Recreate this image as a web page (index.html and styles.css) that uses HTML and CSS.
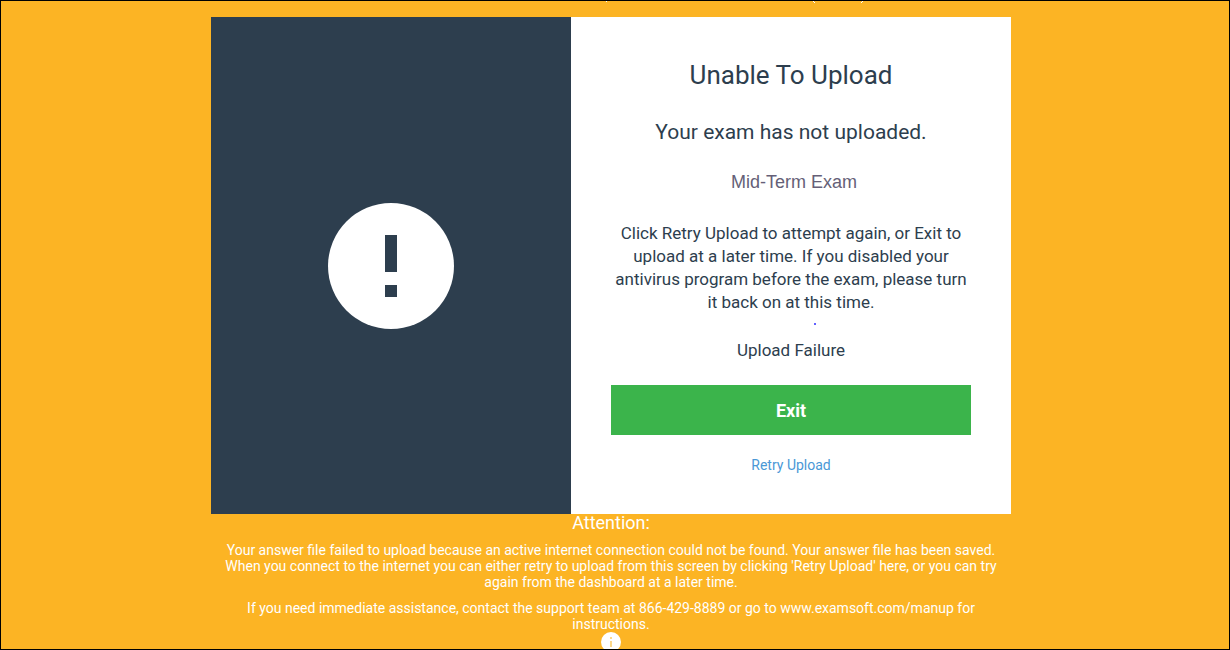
FILE: index.html
```html
<!DOCTYPE html>
<html lang="en">
    <head>
        <meta charset="UTF-8">
        <meta name="viewport" content="width=device-width, initial-scale=1.0">
        <title>Unable To Upload</title>
        <link rel="stylesheet" href="styles.css">
    </head>
    <body>
        <div class="screen">
            <div class="top-edge">
                <svg width="260" height="3" viewBox="0 0 260 3" aria-hidden="true">
                    <path d="M1 0h1v1h-1z M208 0h1v1h1v1h-1v-1h-1z M257 0h1v1h-1v1h-1v-1h1z"/>
                </svg>
            </div>
            <main class="card">
                <div class="card-icon">
                    <svg class="warning" viewBox="0 0 126 126" role="img" aria-label="Warning">
                        <circle cx="63" cy="63" r="63" fill="#fff"/>
                        <path d="M57 32h12v37h-12z M57 82h12v12h-12z" fill="#2d3e4e"/>
                    </svg>
                </div>
                <div class="card-body">
                    <h1>Unable To Upload</h1>
                    <h2>Your exam has not uploaded.</h2>
                    <p class="exam-name">Mid-Term Exam</p>
                    <p class="message">Click Retry Upload to attempt again, or Exit to upload at a later time. If you disabled your antivirus program before the exam, please turn it back on at this time.</p>
                    <div class="dot"></div>
                    <p class="status">Upload Failure</p>
                    <button type="button" class="btn-exit">Exit</button>
                    <a href="#" class="retry">Retry Upload</a>
                </div>
            </main>
            <footer class="attention">
                <h3>Attention:</h3>
                <p>Your answer file failed to upload because an active internet connection could not be found. Your answer file has been saved. When you connect to the internet you can either retry to upload from this screen by clicking 'Retry Upload' here, or you can try again from the dashboard at a later time.</p>
                <p>If you need immediate assistance, contact the support team at 866-429-8889 or go to www.examsoft.com/manup for instructions.</p>
                <svg class="info" viewBox="0 0 20 20" role="img" aria-label="Information">
                    <circle cx="10" cy="10" r="10" fill="#fff"/>
                    <path d="M9 5h2v2h-2z M9 9h2v6h-2z" fill="#fdd88a"/>
                </svg>
            </footer>
        </div>
    </body>
</html>
```

FILE: styles.css
```css
*, *::before, *::after {
    box-sizing: border-box;
}

body, h1, h2, h3, p {
    margin: 0;
    font-weight: normal;
}

body {
    font-family: Roboto, "Liberation Sans", sans-serif;
    color: #2d3e4e;
    text-align: center;
}

.screen {
    height: 100vh;
    padding-right: 8px;
    overflow: hidden;
    border: 1px solid #000;
    background-color: #fcb424;
}

/* end of the line scrolled above the card */
.top-edge {
    display: flex;
    justify-content: flex-end;
    max-width: 800px;
    height: 16px;
    margin: 0 auto;
    padding-right: 146px;
    fill: #fff;
}

.card {
    display: flex;
    max-width: 800px;
    margin: 0 auto;
    background-color: #fff;
}

.card-icon {
    display: flex;
    width: 45%;
    align-items: center;
    justify-content: center;
    background-color: #2d3e4e;
}

.warning {
    width: 126px;
}

.card-body {
    display: flex;
    width: 55%;
    flex-direction: column;
    padding: 40px;
}

h1 {
    font-size: 26px;
    line-height: 36px;
}

h2 {
    margin-top: 24px;
    font-size: 21px;
    line-height: 30px;
}

.exam-name {
    margin-top: 23px;
    padding-left: 6px;
    font-family: "Liberation Sans", Arial, sans-serif;
    font-size: 18px;
    line-height: 24px;
    color: #655f77;
}

.message {
    margin-top: 28px;
    font-size: 17px;
    line-height: 23px;
}

.dot {
    width: 2px;
    height: 2px;
    margin: 9px 155px 0 auto;
    border-radius: 1px;
    background-color: #2d2dff;
}

.status {
    margin-top: 13px;
    font-size: 17px;
    line-height: 24px;
}

.btn-exit {
    height: 50px;
    margin-top: 23px;
    border: 0;
    background-color: #3bb44b;
    color: #fff;
    font-family: inherit;
    font-size: 18px;
    font-weight: bold;
}

.retry {
    align-self: center;
    margin-top: 21px;
    font-size: 14px;
    line-height: 18px;
    color: #4a98d6;
    text-decoration: none;
}

.attention {
    max-width: 800px;
    margin: 0 auto;
    padding: 0 12px;
    color: #fff;
}

.attention h3 {
    font-size: 18px;
    line-height: 18px;
}

.attention p {
    margin-top: 10px;
    font-size: 14px;
    line-height: 16px;
}

.info {
    display: block;
    width: 20px;
    margin: 0 auto;
}
```
